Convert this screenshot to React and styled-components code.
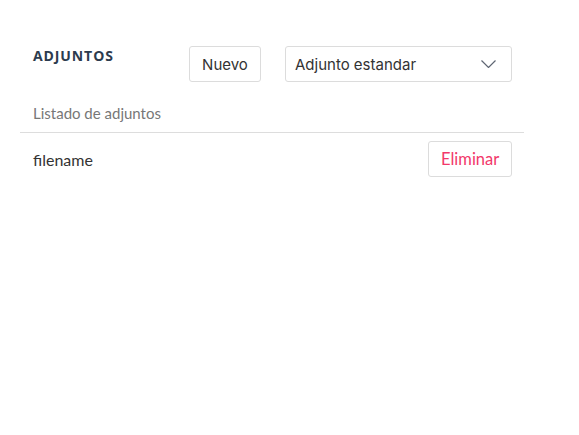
import React from "react";
import styled, { createGlobalStyle } from "styled-components";

const GlobalStyle = createGlobalStyle`
  body {
    margin: 0;
    background: #ffffff;
    font-family: Lato, "Noto Sans", sans-serif;
  }
`;

const Wrapper = styled.div`
  width: 504px;
  margin-left: 20px;
  padding-top: 46px;
`;

const Header = styled.div`
  display: flex;
  align-items: flex-start;
  padding: 0 12px 0 13px;
`;

const Title = styled.h2`
  flex: 1;
  margin: 0;
  padding-top: 1px;
  font-family: "Open Sans", sans-serif;
  font-size: 14px;
  font-weight: 700;
  line-height: 18px;
  letter-spacing: 0.9px;
  color: #2c3b4e;
`;

const Button = styled.button`
  height: 36px;
  padding: 0 12px;
  background: #ffffff;
  border: 1px solid #dcdcdc;
  border-radius: 3px;
  font-family: ${(p) => (p.$lato ? "Lato" : "Inter")}, sans-serif;
  font-size: 15px;
  color: ${(p) => p.$color || "#333333"};
  cursor: pointer;
`;

const NewButton = styled(Button)`
  width: 72px;
  margin-right: 24px;
`;

const Select = styled.div`
  width: 227px;
  height: 36px;
  box-sizing: border-box;
  display: flex;
  align-items: center;
  justify-content: space-between;
  padding: 0 15px 0 9px;
  border: 1px solid #dcdcdc;
  border-radius: 3px;
  font-family: Inter, sans-serif;
  font-size: 15px;
  color: #333333;
`;

const Subtitle = styled.div`
  margin-top: 21px;
  padding: 0 13px 9px;
  border-bottom: 1px solid #dddddd;
  font-size: 15px;
  line-height: 20px;
  color: #777777;
`;

const Row = styled.div`
  display: flex;
  align-items: center;
  justify-content: space-between;
  padding: 8px 12px 0 13px;
`;

const FileName = styled.span`
  font-size: 16px;
  color: #333333;
`;

const DeleteButton = styled(Button)`
  width: 84px;
  font-size: 16.5px;
`;

const Chevron = () => (
  <svg width="15" height="8" viewBox="0 0 15 8" fill="none">
    <path d="M0.5 0.5l7 7 7-7" stroke="#5f6673" strokeWidth="1.2" />
  </svg>
);

export default function App() {
  return (
    <>
      <GlobalStyle />
      <Wrapper>
        <Header>
          <Title>ADJUNTOS</Title>
          <NewButton>Nuevo</NewButton>
          <Select>
            Adjunto estandar
            <Chevron />
          </Select>
        </Header>
        <Subtitle>Listado de adjuntos</Subtitle>
        <Row>
          <FileName>filename</FileName>
          <DeleteButton $lato $color="#f2386a">
            Eliminar
          </DeleteButton>
        </Row>
      </Wrapper>
    </>
  );
}
